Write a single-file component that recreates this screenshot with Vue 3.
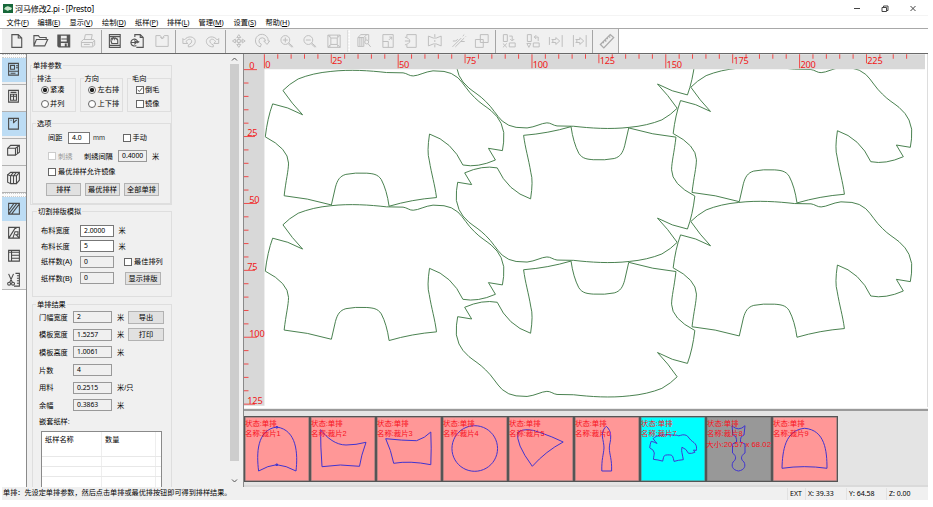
<script setup>
const menus = [
  ['文件', 'F', 31], ['编辑', 'E', 32], ['显示', 'V', 32.5], ['绘制', 'D', 33], ['纸样', 'P', 32],
  ['排样', 'L', 31.5], ['管理', 'M', 35], ['设置', 'S', 32], ['帮助', 'H', 32],
]

const toolGroups = [
  { end: 'bar', icons: [
    { c: 'dark', d: 'M7 5.5h6.5l3.5 3.5v9.500h-10zM13.500 5.500v3.500h3.500' },
    { c: 'dark', d: 'M5 17v-10.500h4.500l1.500 2h6.500v2M5 17l2.500-6.500h11.500l-3 6.500z' },
    { c: 'dark', d: 'M6 6h12v12h-11l-1-1z', f: 'M6 6h3v6.500h6v-6.500h3v12h-2v-4h-7v4h-2l-1-1zM9.500 9.500h5.500v1h-5.500zM13 14.500h2v3.500h-2z' },
    { c: 'pale', d: 'M8.500 10.500l1-5h7l-1 5M5.500 12.500l2-2h10.500l1 1.500v4l-2 2h-11.500zM5.500 13.500h11.500l2-2M17 13.500v4M8 15.500h6' },
  ] },
  { end: 'bar', icons: [
    { c: 'dark', d: 'M6.500 5.500h11v13h-11zM6.500 7.500h11M6.500 16.500h11M9 14.500c-2-5 0-6 .5-4.500c.5-1.500 1.500-1.500 2 0c.5-1.500 1.500-1 2 0c.5-1 1.500 0 1.500 1.500v3z' },
    { c: 'dark', d: 'M9 8v-2.500h5.500l3 3v10h-7M14.500 5.500v3h3M10.500 16.500a3.500 3.500 0 1 1 1.500-3l1.500-1M12 13.500l-2-1M5.500 13.500h4.500M8.500 11.500l2 2-2 2' },
    { c: 'pale', d: 'M6 6.500h4.500l2 3 2-3h4v11h-12.500zM10.500 8l2 2 2-2' },
  ] },
  { end: 'bar', icons: [
    { c: 'pale', d: 'M6 9.500v5h5l-1.800-1.800c1.500-3 4.800-3.200 5.600-1.200c.7 2-1 3.500-3.300 4.500v2c5 0 7.500-3.500 7-6.500c-.8-4-7.500-5.500-11-.5z' },
    { c: 'pale', d: 'M18 9.500v5h-5l1.800-1.800c-1.500-3-4.800-3.200-5.600-1.200c-.7 2 1 3.500 3.300 4.500v2c-5 0-7.500-3.500-7-6.500c.8-4 7.500-5.500 11-.5z' },
  ] },
  { end: 'grip', icons: [
    { c: 'pale', d: 'M12 10.500v-2h-2l2-3 2 3h-2M12 13.500v2h-2l2 3 2-3h-2M10.500 12h-2v-2l-3 2 3 2v-2M13.500 12h2v-2l3 2-3 2v-2M10.500 10.500h3v3h-3z' },
    { c: 'pale', d: 'M9.500 18a6.500 6.500 0 1 1 8-6h1.500l-2.700 3.500-3.300-3.500h1.700a3.300 3.300 0 1 0-4.200 3.200z' },
    { c: 'pale', d: 'M15 11a4.500 4.500 0 1 1-9 0a4.500 4.500 0 1 1 9 0M14 14l4.500 4M8 11h5M10.500 8.500v5M13.500 15l4 3.500' },
    { c: 'pale', d: 'M15 11a4.500 4.500 0 1 1-9 0a4.500 4.500 0 1 1 9 0M14 14l4.500 4M8 11h5M13.500 15l4 3.500' },
    { c: 'pale', d: 'M6 6h12.500v12.500h-12.500zM9 9h6.500v6.500h-6.500zM6 6l3 3M18.500 6l-3 3M6 18.500l3-3M18.500 18.500l-3-3M8 6v2M16 6v2M8 18v-2M16 18v-2' },
  ] },
  { end: 'bar', icons: [
    { c: 'pale', d: 'M6 8.500l3-3h8v6M6 8.500v9h6v-9zM8 8v9M10 8v9M12 8.500l3-3M17 13a2 2 0 1 1-4 0a2 2 0 1 1 4 0M14 11v-3M16.500 15l2.500 3' },
    { c: 'pale', d: 'M7 5.500h10.500v13h-10.500zM7 12.500h5.500v6M13 11l3-3M13.500 8h2.500v2.500' },
    { c: 'pale', d: 'M8 8v-2.500h9.500v13h-9.500v-2.500M6 8c3 1 5 2 5 4s-2 3-5 4M6 12h5' },
    { c: 'pale', d: 'M5.500 7l5 2h3l5-2v10l-5-2h-3l-5 2zM12 5v3M12 11v2M12 16v2.500' },
    { c: 'pale', d: 'M5.500 18l9-9M8.500 18l9-9M16 7l1.500-1.500M19 7.500l.5-.5M6 12h3l2-2M14 12.500h4' },
    { c: 'pale', d: 'M10.500 5.500h8v8h-8zM5.500 10.500h8v8h-8z' },
  ] },
  { end: 'bar', icons: [
    { c: 'pale', d: 'M6.500 5.500h4v7h-4zM6 14.500l4 4M10 14.500l-4 4M12.500 7h3v4M13.500 10l2 2 2-2M12.500 14h6v4h-6z' },
    { c: 'pale', d: 'M6.500 5.500h4v7h-4zM6 14.500h4l-2 4zM17.500 12v-4h-4M15.500 6l-2 2 2 2M12.500 14h6v4h-6z' },
    { c: 'pale', d: 'M5.500 8v8M18.500 6v12M8 10.500h4v-2l4 3.500-4 3.500v-2h-4l1.500-1.500z' },
    { c: 'pale', d: 'M5.500 6v12M18.500 6v12M8 10.500h4v-2l4 3.500-4 3.500v-2h-4l1.500-1.500z' },
  ] },
  { end: 'none', icons: [
    { c: 'grey', d: 'M5.500 15.500l10-10 3.500 3-10 10.500zM8 13l1 1M10 11l1.500 1.500M12 9l1 1M14 7l1.500 1.500' },
  ] },
]

const sideTop = [
  { on: true, d: 'M6.500 5.500h10v12h-10zM6.500 13.500h10M8.500 7.500h4v4h-4zM14 8h2M14 10h2M8.500 15.500h5' },
  { on: false, d: 'M6.500 5.500h10v12h-10zM8.500 9.500h6v6h-6zM11.500 9.500v6M8.500 11.500h6M8.500 7.500h6' },
  { on: true, d: 'M6.500 6.500h10v11h-10zM11.500 6.500v5M11.500 11l2.500-2.500M8.500 8.500h1M14 8.500h1' },
  { on: false, d: 'M5.500 9.500h8v7h-8zM5.500 9.500l3-3h9v7l-4 3M13.500 9.500l4-3M15.500 8v7' },
  { on: false, d: 'M5.500 9l3-2.500h9v8l-3 3.500M5.500 9l3 1v8l-3-1.500zM8.500 10h3v8h-3M11.500 10h3v8h-3M14.500 10l3-3.500M8.500 10l3-3.500M11.500 10l3-3.500' },
]
const sideBottom = [
  { on: true, d: 'M6.500 6.500h11v11h-11zM7 17l8-10.500M9.500 17.500l8-10.500M7 13.500l5-7' },
  { on: false, d: 'M6.500 6.500h11v11h-11zM7 17l6-9.500h1.500M11 17l2-6h3v3h-3M14 14l3 3' },
  { on: false, d: 'M6.500 6.500h11v11h-11zM6.500 8.500h11M9.500 6.500v11M9.500 11.500h8M9.500 14.500h8' },
  { on: false, d: 'M6.500 6l4 9M11.500 6l-4 9M8.500 16a1.500 1.500 0 1 1-3 0a1.500 1.500 0 1 1 3 0M12.500 16a1.500 1.500 0 1 1-3 0a1.500 1.500 0 1 1 3 0M13.500 5.500h4v13h-5.500M15 8h2M15 10.500h2M15 13h2M15 15.500h2' },
]

const results = [
  { label: '门幅宽度', value: '2', unit: '米', action: '导出' },
  { label: '模板宽度', value: '1.5257', unit: '米', action: '打印' },
  { label: '模板高度', value: '1.0061', unit: '米' },
  { label: '片数', value: '4', unit: '' },
  { label: '用料', value: '0.2515', unit: '米/只' },
  { label: '余幅', value: '0.3863', unit: '米' },
]

const STEP = 13.4
const topTicks = Array.from({ length: 49 }, (_, i) => ({
  x: 20.4 + i * STEP, len: i % 10 === 0 ? 14 : i % 5 === 0 ? 9 : 4.5,
}))
const topLabels = Array.from({ length: 10 }, (_, i) => ({
  x: 21.2 + i * STEP * 5, y: i % 2 ? 9.8 : 14.2, t: String(i * 25),
}))
const leftTicks = Array.from({ length: 26 }, (_, i) => ({
  y: 15.4 + i * STEP, len: i % 10 === 0 ? 13 : i % 5 === 0 ? 11 : 4.5,
}))
const leftLabels = Array.from({ length: 6 }, (_, i) => ({
  x: i % 2 ? 3.3 : 5.3, y: 15 + i * STEP * 5, t: String(i * 25),
}))

const hippo = 'M283 90.300Q289 84 298.300 78.700Q313 72.800 331 71.200C350 69 370 70.400 386.700 72.300L403.300 72.600C407 73 410 76 413.500 75.700C419 75.500 425 71.500 433.300 70.600L444.300 71.200Q452 72.200 458.200 77.500C464 83 468 91 474.800 97.200C481 103.500 486 106 491.500 110.500Q498.500 116.500 501.500 123.200Q505.500 132 504 142L502.800 150.500L488.800 148.200L495.800 159.900Q478 167.800 463.200 164.900Q452.500 141.500 429.800 133.900Q427 152 429.500 160C432 175 435 184 436.800 197.500Q412 199.500 389.300 206.200Q387 190 381.500 179.500C378 174 373 173.600 367 173.100Q355 172.400 346 174.300C340 176 337.500 180 335.600 187L331.500 204.900Q307 197.800 284.200 195.700C286 180 288.500 171 288.600 163Q288.400 148.500 265.300 136.700Q267.500 118 272.700 103.700Q288 106.500 302.700 114.600Q292 103.500 283 90.300Z'
const pieces = [
  'translate(0 0)', 'translate(0 134.500)', 'translate(408.500 -3.300)', 'translate(408.500 131.200)',
  'translate(960.800 198.400) rotate(180)', 'translate(960.800 332.700) rotate(180)', 'translate(960.800 467.300) rotate(180)',
]

const tiles = [
  { d: 'M14.600 55C12.500 38 12.500 14 32.700 11C53 14 54 38 52 55Q42 49.500 32.700 48.700Q24 49.500 14.600 55M32 10.500h1.500v1.500h-1.500zM32 48h1.500v1.500h-1.500z' },
  { d: 'M10.600 13.700C17 22 26 29 36 29Q46 29 56 26.300Q51 40 49.500 50.300Q30 47.500 12 50.700Q10.500 30 10.600 13.700Z' },
  { d: 'M9.700 22.700Q26 24.500 40.600 24.700Q49 22 54.800 16Q55.600 32 54.800 48.700Q34 44.500 17.700 47.300Q15 34 9.700 22.700Z' },
  { d: 'M32.800 9.700A22.800 22.800 0 1 1 32.700 9.700Z' },
  { d: 'M24.300 50.300Q7 27 10 16Q18 11 32 16.500Q44 20.500 55.200 26Q38 35 24.300 50.300Z' },
  { d: 'M32.300 10.300C30 12 28 16 28.300 20C29 25 30 28 30 32C29.500 39 27.500 43 27.800 55H37.600C38 43 35.500 39 35.300 32C35.300 28 37 25 36.700 20C37 16 34.500 12 32.300 10.300Z' },
  { kind: 'cyan', hippo: true },
  { kind: 'grey', size: '大小:20.57 x 68.02', d: 'M26 9.700Q32.500 16 39 9.700L38 19Q34 20 34.500 26L39 28V37C34 40 35 44 38 46C40 50 38.500 54 32.500 55C26.500 54 25 50 27 46C30 44 31 40 26.500 37V28L30.500 26Q31 20 27 19Z' },
  { d: 'M10 52.300C10.500 35 13 14 32.700 12.300C53 14 55 35 55 52.300Q32 49 10 52.300Z' },
]
</script>

<template>
  <div class="app">
    <header class="title">
      <svg class="logo" viewBox="0 0 10 9"><rect width="10" height="9" fill="#17683a" /><path d="M1 5Q3 1 7 3L9 4L8 6H6L5 7L3 6Z" fill="#c7e4c9" /></svg>
      <span class="name">河马修改2.pi - [Presto]</span>
      <svg class="controls" viewBox="0 0 70 14"><path d="M2 6.500h6M30 5.500h4.500v4h-4.500zM31.500 5.500v-1.500h4.500v4.500h-1.500M58.500 4l5 5M63.500 4l-5 5" /></svg>
    </header>
    <nav class="menu">
      <span v-for="m in menus" :key="m[0]" :style="{ width: m[2] + 'px' }">{{ m[0] }}(<u>{{ m[1] }}</u>)</span>
    </nav>
    <div class="toolrow">
      <div class="tools">
        <template v-for="(g, gi) in toolGroups" :key="gi">
          <svg v-for="(ic, i) in g.icons" :key="i" :class="['tool', ic.c]" viewBox="0 0 24 24">
            <path :d="ic.d" /><path v-if="ic.f" class="solid" :d="ic.f" />
          </svg>
          <i v-if="g.end !== 'none'" :class="g.end"></i>
        </template>
      </div>
    </div>

    <main class="body">
      <aside class="side">
        <div class="sidebox">
          <i class="hgrip"></i>
          <div v-for="(s, i) in sideTop" :key="i" :class="['cell', { on: s.on }]"><svg viewBox="0 0 24 24"><path :d="s.d" /></svg></div>
          <i class="hgrip"></i>
          <div v-for="(s, i) in sideBottom" :key="i" :class="['tight', { on: s.on }]"><svg viewBox="0 0 24 24"><path :d="s.d" /></svg></div>
        </div>
      </aside>

      <section class="panel">
        <div class="group params">
          <b class="cap">单排参数</b>
          <div class="trio">
            <div class="group mini"><b class="cap">排法</b>
              <label class="opt"><i class="radio sel"></i>紧凑</label><label class="opt"><i class="radio"></i>并列</label></div>
            <div class="group mini"><b class="cap">方向</b>
              <label class="opt"><i class="radio sel"></i>左右排</label><label class="opt"><i class="radio"></i>上下排</label></div>
            <div class="group mini"><b class="cap">毛向</b>
              <label class="opt"><i class="check"><svg viewBox="0 0 8 8"><path d="M1 4l2.200 2 4-5" /></svg></i>倒毛</label><label class="opt"><i class="check"></i>镜像</label></div>
          </div>
          <div class="group options"><b class="cap">选项</b>
            <div class="row o1"><span>间距</span><span class="field w">4.0</span><span class="latin mm">mm</span><label><i class="check"></i>手动</label></div>
            <div class="row o2"><label class="off"><i class="check"></i>刺绣</label><span>刺绣间隔</span><span class="field">0.4000</span><span>米</span></div>
            <div class="row o3"><label><i class="check"></i>最优排样允许镜像</label></div>
            <div class="row o4"><button>排样</button><button>最优排样</button><button>全部单排</button></div>
          </div>
        </div>

        <div class="group cut"><b class="cap">切割排版模拟</b>
          <div class="row c"><span>布料宽度</span><span class="field w">2.0000</span><span>米</span></div>
          <div class="row c"><span>布料长度</span><span class="field w">5</span><span>米</span></div>
          <div class="row c"><span>纸样数(A)</span><span class="field">0</span><label><i class="check"></i>最佳排列</label></div>
          <div class="row c last"><span>纸样数(B)</span><span class="field">0</span><button>显示排版</button></div>
        </div>

        <div class="group result"><b class="cap">单排结果</b>
          <div v-for="r in results" :key="r.label" class="row r">
            <span>{{ r.label }}</span><span class="field">{{ r.value }}</span><span>{{ r.unit }}</span><button v-if="r.action">{{ r.action }}</button>
          </div>
          <div class="nest">嵌套纸样:</div>
          <div class="table">
            <div class="tr th"><span>纸样名称</span><span>数量</span><span></span></div>
            <div v-for="n in 3" :key="n" class="tr"><span></span><span></span><span></span></div>
          </div>
        </div>
      </section>
      <div class="scroll">
        <svg viewBox="0 0 9 9"><path d="M2 6l2.500-2.500L7 6" /></svg><i></i><svg viewBox="0 0 9 9"><path d="M2 3l2.500 2.500L7 3" /></svg>
      </div>

      <section class="work">
        <svg class="canvas" viewBox="0 0 684 353">
          <defs><clipPath id="sheet"><rect x="20.500" y="15" width="663" height="338" /></clipPath></defs>
          <rect width="684" height="353" fill="#fff" />
          <rect width="682" height="15" fill="#d8d8d8" /><rect width="20.500" height="352" fill="#d8d8d8" />
          <g class="ticks">
            <line v-for="(t, i) in topTicks" :key="'t' + i" :x1="t.x" :x2="t.x" y1="0" :y2="t.len" />
            <line v-for="(t, i) in leftTicks" :key="'l' + i" :y1="t.y" :y2="t.y" x1="0" :x2="t.len" />
          </g>
          <g class="nums">
            <text v-for="l in topLabels" :key="'a' + l.t" :x="l.x" :y="l.y">{{ l.t }}</text>
            <text v-for="l in leftLabels" :key="'b' + l.t" :x="l.x" :y="l.y">{{ l.t }}</text>
          </g>
          <g clip-path="url(#sheet)">
            <g transform="translate(-244 -54)" class="pieces">
              <path v-for="p in pieces" :key="p" :d="hippo" :transform="p" />
            </g>
          </g>
        </svg>
        <div class="tray">
          <div v-for="(t, i) in tiles" :key="i" :class="['tile', t.kind]">
            <svg viewBox="0 0 66 65">
              <g v-if="t.hippo" transform="translate(9.700 18.700) scale(.196) translate(-265.300 -70)"><path :d="hippo" /></g>
              <path v-else :d="t.d" />
              <text x="1" y="9.500">状态:单排</text><text x="1" y="20.300">名称:裁片{{ i + 1 }}</text>
              <text v-if="t.size" x="0" y="31" textLength="65" lengthAdjust="spacingAndGlyphs">{{ t.size }}</text>
            </svg>
          </div>
        </div>
      </section>
    </main>

    <footer class="status">
      <span class="hint">单排：先设定单排参数，然后点击单排或最优排按钮即可得到排样结果。</span>
      <span class="pos ext">EXT</span><span class="pos px">X: 39.33</span><span class="pos py">Y: 64.58</span><span class="pos pz">Z: 0.00</span>
    </footer>
  </div>
</template>

<style>
body { background: #fff; overflow: hidden; }
</style>

<style scoped>
* { box-sizing: border-box; }
.app { width: 928px; height: 507px; display: flex; flex-direction: column; font-family: "Liberation Sans", "Noto Sans CJK SC", sans-serif; font-size: 7.2px; line-height: 9px; color: #000; }
svg { display: block; fill: none; stroke-width: 1; }
i, b { font-style: normal; font-weight: normal; }
.title { height: 16px; display: flex; align-items: center; padding: 2px 6px 0 3px; border-bottom: 1px solid #f4f4f4; }
.logo { width: 10px; height: 9px; margin-right: 2px; }
.name { font: 8.1px/12px "Noto Sans", "Noto Sans CJK SC", sans-serif; flex: 1; white-space: nowrap; letter-spacing: -.2px; }
.controls { width: 70px; height: 14px; stroke: #444; }
.menu { height: 13px; display: flex; padding: 1px 0 0 6.500px; border-bottom: 1px solid #a8a8a8; font: 7.2px/10px "Noto Sans", "Noto Sans CJK SC", sans-serif; white-space: nowrap; }
.toolrow { height: 25px; border-bottom: 1px solid #696969; padding-left: 2px; flex: none; }
.tools { width: 617px; height: 24px; background: #f0f0f0; border-right: 1px solid #aaa; display: flex; align-items: center; padding-left: 3.200px; }
.tool { width: 23.600px; height: 24px; flex: none; }
.dark { stroke: #555; stroke-width: 1.150; }
.dark .solid { fill: #555; stroke: none; }
.grey { stroke: #aaa; stroke-width: 1.300; }
.pale { stroke: #bebebe; }
.bar { width: 1px; height: 23px; background: #a5a5a5; margin: 0 1.150px; flex: none; }
.grip { width: 3px; height: 22px; margin: 0 1.900px; flex: none; background: radial-gradient(circle, #fff 0 45%, transparent 50%) 0 0 / 3px 3px; border-left: 1px solid #ddd; }
.body { height: 433px; display: flex; flex: none; }
.side { width: 27px; border-right: 1px solid #8a8a8a; padding-left: 2px; }
.sidebox { background: #f0f0f0; height: 236px; border-bottom: 1px solid #b8b8b8; }
.hgrip { display: block; height: 4px; border-top: 1px dotted #ccc; border-bottom: 1px dotted #ccc; background: #fafafa; }
.cell { height: 27.100px; border-bottom: 1px solid #b2b2b2; padding-bottom: 2px; }
.cell svg, .tight svg { width: 24px; height: 23.500px; stroke: #4a4a4a; stroke-width: 1.100; }
.cell.on svg, .tight.on svg { background: #bcdcf4; }
.tight { height: 23.500px; }
.panel { width: 203px; background: #f0f0f0; padding: 10.500px 0 0 3px; overflow: hidden; white-space: nowrap; }
.group { border: 1px solid #dedede; }
.cap { display: block; width: max-content; height: 9px; margin: -5px 0 0 2px; padding: 0 1px; background: #f0f0f0; }
.params { width: 142px; height: 140px; padding-left: 1px; }
.params > .cap { margin-left: 0; }
.trio { display: flex; gap: 4px; margin-top: 8px; }
.mini { width: 43.500px; height: 34.500px; padding-left: 1px; }
.mini .opt { display: flex; align-items: center; height: 14px; padding-left: 6.500px; gap: 1.500px; }
.radio { width: 8px; height: 8px; border: 1px solid #666; border-radius: 50%; background: #fff; flex: none; }
.radio.sel { background: radial-gradient(circle, #222 0 1.900px, #fff 2.400px); }
.check { width: 8px; height: 8px; border: 1px solid #666; background: #fff; flex: none; }
.check svg { width: 6px; height: 6px; stroke: #222; }
label { display: flex; align-items: center; gap: 2px; }
.options { width: 139px; height: 81px; margin-top: 11px; padding-left: 2px; }
.options .cap { margin-left: 1px; }
.row { display: grid; align-items: center; }
.off { color: #999; }
.off .check { border-color: #ccc; }
.field { display: block; height: 12px; border: 1px solid #999; padding-left: 3px; font: 6.800px/10px "Noto Sans", sans-serif; }
.field.w { background: #fff; border-color: #777; }
.latin { font-family: "Liberation Sans"; color: #333; }
.mm { padding-left: 3px; }
button { appearance: none; margin: 0; padding: 0; height: 13px; border: 1px solid #b2b2b2; background: #e1e1e1; font: inherit; line-height: 11px; color: #000; text-align: center; }
.o1 { height: 19px; grid-template-columns: 20px 22px 32.500px 30px; padding-left: 13px; }
.o2 { height: 18.500px; grid-template-columns: 36px 34px 34px 10px; padding-left: 13px; }
.o2 .field { width: 29px; }
.o3 { height: 12.500px; padding-left: 13px; }
.o4 { height: 23px; grid-template-columns: 35px 35px 35px; gap: 4px; padding-left: 11px; }
.cut { width: 140px; height: 86px; margin: 6.500px 0 0 2px; }
.cut .cap { margin-left: 4px; margin-bottom: 7px; }
.c { height: 15.600px; grid-template-columns: 39px 34px 38px; padding-left: 8px; }
.c > :nth-child(3) { margin-left: 4.500px; }
.c label { margin-left: 10px !important; }
.c button { margin-left: 11px !important; width: 36px; }
.c.last { height: 17px; }
.result { width: 140px; height: 200px; margin: 6.500px 0 0 2px; }
.result .cap { margin-left: 3px; }
.r { height: 17.600px; grid-template-columns: 34px 39px 16px 36px; padding-left: 6px; }
.r > :nth-child(3) { margin-left: 5px; }
.nest { padding-left: 6px; height: 17px; line-height: 15px; }
.table { width: 121px; margin-left: 8px; border: 1px solid #8a8a8a; background: #fff; }
.tr { display: grid; grid-template-columns: 60px 54px 5px; height: 10.200px; border-bottom: 1px solid #e8e8e8; }
.tr span { border-right: 1px solid #eee; padding-left: 3px; }
.tr span:last-child { border: 0; padding: 0; }
.th { height: 25px; line-height: 15px; }
.scroll { width: 13px; background: #f0f0f0; display: flex; flex-direction: column; }
.scroll svg { width: 9px; height: 10px; stroke: #555; }
.scroll i { width: 9px; height: 397px; background: #cdcdcd; margin-bottom: 15px; }
.work { width: 685px; border-left: 1px solid #8a8a8a; display: flex; flex-direction: column; }
.canvas { width: 684px; height: 353px; border-right: 1px solid #ddd; flex: none; }
.ticks line { stroke: #f04848; stroke-width: 1; }
.nums text { fill: #f01818; font: 9.300px "Noto Sans", sans-serif; letter-spacing: -.250px; }
.pieces path { stroke: #3f7a46; stroke-width: .950; }
.tray { height: 78px; flex: none; border-top: 2px solid #9a9a9a; background: #e4e4e4; display: flex; align-items: flex-start; padding-top: 5px; box-shadow: 0 -1px #ececec; margin-top: 2px; border-bottom: 2px solid #dadada; }
.tile { width: 66px; height: 65.500px; background: #ff9797; border: 1px solid #555; box-shadow: inset 0 0 0 .500px #777; }
.tile svg { width: 66px; height: 65px; margin: -1px 0 0 -1px; overflow: visible; stroke: #4034d0; }
.tile svg g path { stroke-width: 5; }
.tile text { fill: #f8101c; stroke: none; font: 7.400px "Liberation Sans", "Noto Sans CJK SC", sans-serif; }
.tile.cyan { background: #00ffff; }
.tile.grey { background: #989898; stroke: none; }
.status { height: 13px; margin-left: 2px; background: #f0f0f0; display: flex; align-items: center; flex: none; white-space: nowrap; }
.hint { width: 787px; padding-left: 1px; font-size: 7.150px; }
.pos { font: 7px/12px "Noto Sans", sans-serif; border-left: 1px solid #e2e2e2; margin-left: -2px; padding-left: 2px; flex: none; }
.ext { width: 20px; }
.px { width: 43px; }
.py { width: 42px; }
.pz { width: 34px; }
</style>
